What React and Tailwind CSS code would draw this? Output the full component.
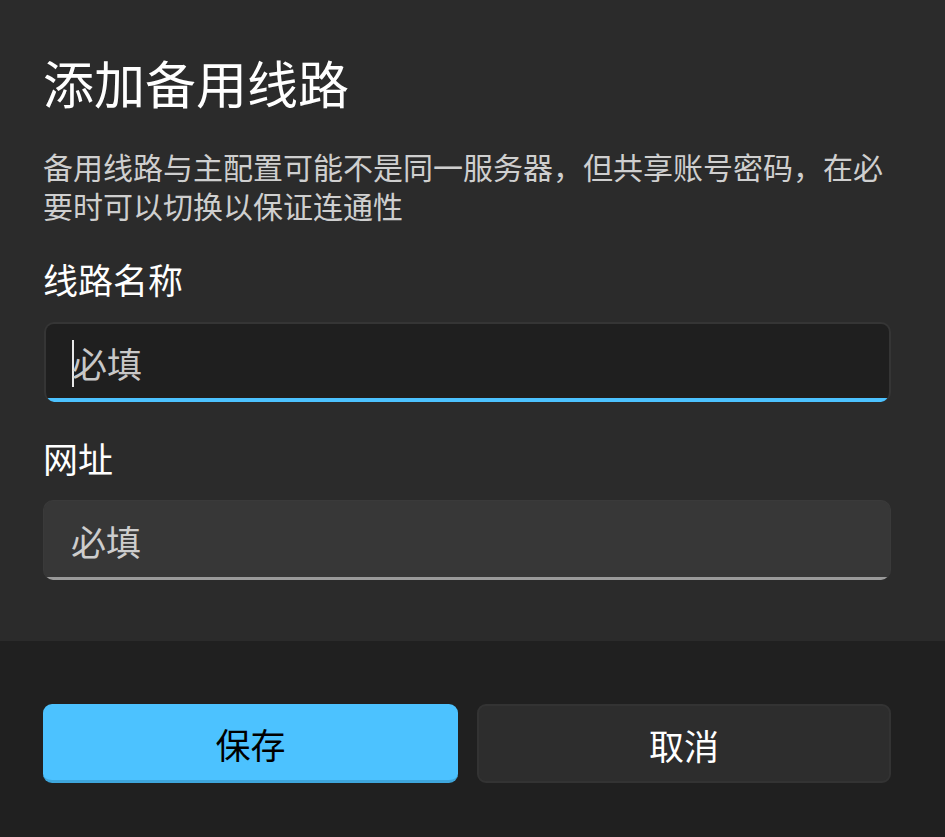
export default function App() {
  const font = { fontFamily: '"Noto Sans CJK SC", "Noto Sans", sans-serif' };
  return (
    <div className="w-[945px] h-[837px] flex flex-col bg-[#202020] overflow-hidden" style={font}>
      <div className="bg-[#2b2b2b] pl-[43px] pr-[54px] pt-[52px] pb-[61px] flex flex-col">
        <h1 className="text-[51px] leading-[60px] text-white font-normal">添加备用线路</h1>
        <p className="mt-[35px] text-[30px] leading-[39px] text-[#cfcfcf]">
          备用线路与主配置可能不是同一服务器，但共享账号密码，在必要时可以切换以保证连通性
        </p>
        <label className="mt-[32px] text-[35px] leading-[44px] text-white">线路名称</label>
        <div className="mt-[21px] ml-px h-[80px] rounded-[10px] border-2 border-[#353535] border-b-0 bg-[#1f1f1f] relative overflow-hidden flex items-center pl-[26px]">
          <span className="w-[2px] h-[47px] bg-[#e8e8e8] mr-[-2px]"></span>
          <span className="text-[35px] leading-[44px] text-[#c8c8c8]">必填</span>
          <div className="absolute left-0 right-0 bottom-0 h-[4px] bg-[#4cc2ff]"></div>
        </div>
        <label className="mt-[34px] text-[35px] leading-[44px] text-white">网址</label>
        <div className="mt-[20px] h-[80px] rounded-[10px] border border-[#3a3a3a] border-b-0 bg-[#373737] relative overflow-hidden flex items-center pl-[27px]">
          <span className="text-[35px] leading-[44px] text-[#cdcdcd]">必填</span>
          <div className="absolute left-0 right-0 bottom-0 h-[3px] bg-[#9a9a9a]"></div>
        </div>
      </div>
      <div className="flex-1 bg-[#202020] pl-[43px] pt-[63px] flex gap-[19px] items-start">
        <button className="w-[415px] h-[79px] rounded-[9px] bg-[#4cc2ff] border-b-[3px] border-[#3ea6dc] text-black text-[35px] leading-[44px] flex items-center justify-center pt-[3px]">
          保存
        </button>
        <button className="w-[414px] h-[79px] rounded-[9px] bg-[#2d2d2d] border-2 border-[#333333] text-white text-[35px] leading-[44px] flex items-center justify-center pt-[2px]">
          取消
        </button>
      </div>
    </div>
  );
}
